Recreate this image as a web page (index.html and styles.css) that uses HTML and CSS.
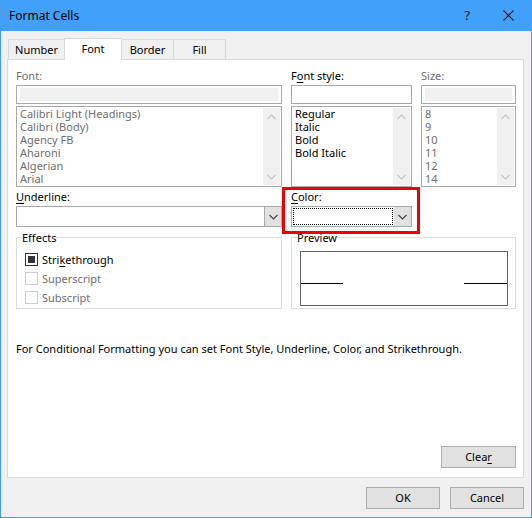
FILE: index.html
```html
<!DOCTYPE html>
<html>
<head>
<meta charset="utf-8">
<title>Format Cells</title>
<link rel="stylesheet" href="styles.css">
</head>
<body>
<div class="window">
  <div class="titlebar">
    <span class="title">Format Cells</span>
    <div class="tb-buttons">
      <span class="help">?</span>
      <svg class="close" width="11" height="11" viewBox="0 0 11 11"><path d="M0.5 0.5 L10.5 10.5 M10.5 0.5 L0.5 10.5" stroke="#1a1a1a" stroke-width="1.1" fill="none"/></svg>
    </div>
  </div>
  <div class="body">
    <div class="tabs">
      <div class="tab">Number</div>
      <div class="tab active">Font</div>
      <div class="tab">Border</div>
      <div class="tab">Fill</div>
    </div>
    <div class="panel">
      <div class="top-grid">
        <div class="col col-font">
          <div class="label disabled">Font:</div>
          <div class="input disabled-input"><div class="fill"></div></div>
          <div class="list">
            <ul class="items gray">
              <li>Calibri Light (Headings)</li>
              <li>Calibri (Body)</li>
              <li>Agency FB</li>
              <li>Aharoni</li>
              <li>Algerian</li>
              <li>Arial</li>
            </ul>
            <div class="scrollbar">
              <svg width="9" height="6" viewBox="0 0 9 6"><path d="M0.5 5 L4.5 1 L8.5 5" stroke="#c4c4c4" stroke-width="1.2" fill="none"/></svg>
              <svg width="9" height="6" viewBox="0 0 9 6"><path d="M0.5 1 L4.5 5 L8.5 1" stroke="#c4c4c4" stroke-width="1.2" fill="none"/></svg>
            </div>
          </div>
        </div>
        <div class="col col-style">
          <div class="label">F<u>o</u>nt style:</div>
          <div class="input"></div>
          <div class="list">
            <ul class="items">
              <li>Regular</li>
              <li>Italic</li>
              <li>Bold</li>
              <li>Bold Italic</li>
            </ul>
            <div class="scrollbar">
              <svg width="9" height="6" viewBox="0 0 9 6"><path d="M0.5 5 L4.5 1 L8.5 5" stroke="#c4c4c4" stroke-width="1.2" fill="none"/></svg>
              <svg width="9" height="6" viewBox="0 0 9 6"><path d="M0.5 1 L4.5 5 L8.5 1" stroke="#c4c4c4" stroke-width="1.2" fill="none"/></svg>
            </div>
          </div>
        </div>
        <div class="col col-size">
          <div class="label disabled">Size:</div>
          <div class="input disabled-input"><div class="fill"></div></div>
          <div class="list">
            <ul class="items gray">
              <li>8</li>
              <li>9</li>
              <li>10</li>
              <li>11</li>
              <li>12</li>
              <li>14</li>
            </ul>
            <div class="scrollbar">
              <svg width="9" height="6" viewBox="0 0 9 6"><path d="M0.5 5 L4.5 1 L8.5 5" stroke="#c4c4c4" stroke-width="1.2" fill="none"/></svg>
              <svg width="9" height="6" viewBox="0 0 9 6"><path d="M0.5 1 L4.5 5 L8.5 1" stroke="#c4c4c4" stroke-width="1.2" fill="none"/></svg>
            </div>
          </div>
        </div>
      </div>

      <div class="mid-row">
        <div class="field field-underline">
          <div class="label"><u>U</u>nderline:</div>
          <div class="combo">
            <div class="combo-text"></div>
            <div class="drop">
              <svg width="9" height="6" viewBox="0 0 9 6"><path d="M0.5 1 L4.5 5 L8.5 1" stroke="#404040" stroke-width="1.1" fill="none"/></svg>
            </div>
          </div>
        </div>
        <div class="field field-color">
          <div class="label"><u>C</u>olor:</div>
          <div class="combo">
            <div class="combo-text"><div class="focus"></div></div>
            <div class="drop">
              <svg width="9" height="6" viewBox="0 0 9 6"><path d="M0.5 1 L4.5 5 L8.5 1" stroke="#404040" stroke-width="1.1" fill="none"/></svg>
            </div>
          </div>
          <div class="highlight"></div>
        </div>
      </div>

      <div class="groups">
        <fieldset class="group effects">
          <legend>Effects</legend>
          <div class="checks">
            <div class="check">
              <span class="box on"><span class="mark"></span></span>
              <span>Stri<u>k</u>ethrough</span>
            </div>
            <div class="check off">
              <span class="box"></span>
              <span>Superscript</span>
            </div>
            <div class="check off">
              <span class="box"></span>
              <span>Subscript</span>
            </div>
          </div>
        </fieldset>
        <fieldset class="group preview">
          <legend>Preview</legend>
          <div class="preview-box">
            <span class="pline left"></span>
            <span class="pline right"></span>
          </div>
        </fieldset>
      </div>

      <p class="note">For Conditional Formatting you can set Font Style, Underline, Color, and Strikethrough.</p>

      <div class="clear-row">
        <button class="btn">Clea<u>r</u></button>
      </div>
    </div>
    <div class="footer">
      <button class="btn">OK</button>
      <button class="btn">Cancel</button>
    </div>
  </div>
</div>
</body>
</html>
```

FILE: styles.css
```css
* { box-sizing: border-box; }
html, body { margin: 0; padding: 0; }
body {
  width: 532px;
  height: 518px;
  overflow: hidden;
  font-family: "Noto Sans", "Open Sans", sans-serif;
  font-size: 11px;
  color: #000;
}
u { text-decoration: underline; text-underline-offset: 2px; text-decoration-thickness: 1px; }

.window {
  width: 532px;
  height: 518px;
  border: 1px solid #3f9bf7;
  border-top: 0;
  background: #f0f0f0;
  display: flex;
  flex-direction: column;
}
.titlebar {
  height: 31px;
  margin: 0 -1px;
  background: #40a0fa;
  display: flex;
  align-items: center;
  justify-content: space-between;
  padding: 0 18px 1px 9px;
}
.title { font-size: 12px; color: #000; }
.tb-buttons { display: flex; align-items: center; gap: 33px; }
.help { font-size: 12.5px; color: #111; }
.close { display: block; }

.body { flex: 1; display: flex; flex-direction: column; padding: 7px 7px 0 6px; }

.tabs { display: flex; padding-left: 1px; height: 21px; align-items: flex-end; position: relative; z-index: 1; }
.tab {
  height: 20px;
  border: 1px solid #d9d9d9;
  border-bottom: 0;
  margin-left: -1px;
  background: #f0f0f0;
  display: flex;
  align-items: center;
  justify-content: center;
  padding-bottom: 0;
}
.tab:nth-child(1) { width: 57px; margin-left: 0; }
.tab:nth-child(2) { width: 58px; }
.tab:nth-child(3) { width: 53px; }
.tab:nth-child(4) { width: 53px; }
.tab.active {
  background: #fff;
  height: 22px;
  margin-bottom: -1px;
  padding-bottom: 3px;
}

.panel {
  height: 419px;
  background: #fff;
  border: 1px solid #d9d9d9;
  padding: 10px 7px 9px 8px;
  display: flex;
  flex-direction: column;
}

.top-grid {
  display: grid;
  grid-template-columns: 266px 121px 95px;
  column-gap: 9px;
}
.col { display: flex; flex-direction: column; }
.label { height: 13px; line-height: 12px; margin-bottom: 2px; white-space: nowrap; }
.label.disabled { color: #6d6d6d; }
.input { height: 19px; border: 1px solid #a9a9a9; background: #fff; }
.disabled-input { padding: 2px 3px; }
.disabled-input .fill { height: 100%; background: #f0f0f0; }
.list {
  margin-top: 2px;
  height: 81px;
  border: 1px solid #a9a9a9;
  display: flex;
  overflow: hidden;
}
.items {
  list-style: none;
  margin: 0;
  padding: 0 0 0 3px;
  flex: 1;
  line-height: 13px;
  white-space: nowrap;
  overflow: hidden;
}
.items.gray { color: #6d6d6d; }
.scrollbar {
  width: 17px;
  margin: 1px 1px 1px 0;
  background: #f0f0f0;
  display: flex;
  flex-direction: column;
  align-items: center;
  justify-content: space-between;
  padding: 6px 0 5px;
}
.scrollbar svg { display: block; }

.mid-row {
  display: flex;
  gap: 9px;
  margin-top: 4px;
}
.field { display: flex; flex-direction: column; position: relative; }
.field-underline { width: 266px; }
.field-color { width: 121px; }
.combo {
  height: 21px;
  border: 1px solid #a9a9a9;
  background: #fff;
  display: flex;
}
.combo-text { flex: 1; padding: 1px; }
.focus { height: 100%; border: 1px dotted #000; }
.drop {
  width: 17px;
  background: #e1e1e1;
  border-left: 1px solid #a9a9a9;
  display: flex;
  align-items: center;
  justify-content: center;
}
.field-color .drop { border-left: 0; }
.highlight {
  position: absolute;
  left: -9px;
  right: -8px;
  top: -4px;
  bottom: -7px;
  border: 3px solid #ee0000;
  pointer-events: none;
}

.groups {
  display: flex;
  gap: 9px;
  margin-top: 4px;
  align-items: flex-start;
}
.group {
  margin: 0;
  border: 1px solid #dcdcdc;
  padding: 0 0 0 5px;
  min-width: 0;
}
.group legend { padding: 0; line-height: 13px; height: 13px; }
.effects { width: 266px; padding-bottom: 1px; }
.checks { padding: 6px 0 0 3px; }
.check { height: 19px; display: flex; align-items: center; gap: 4px; }
.check.off { color: #6d6d6d; }
.box {
  width: 13px;
  height: 13px;
  border: 1px solid #cccccc;
  background: #fff;
  display: flex;
  align-items: center;
  justify-content: center;
}
.box.on { border-color: #333; }
.mark { width: 7px; height: 7px; background: #333; }

.preview { width: 225px; padding-bottom: 2px; }
.preview-box {
  margin: 7px 0 0 3px;
  width: 208px;
  height: 55px;
  border: 1px solid #646464;
  display: flex;
  justify-content: space-between;
  align-items: flex-start;
}
.pline { display: block; height: 1px; background: #000; margin-top: 31px; }
.pline.left { width: 42px; }
.pline.right { width: 43px; }

.note { margin: 33px 0 0; line-height: 14px; white-space: nowrap; }

.clear-row { margin-top: auto; display: flex; justify-content: flex-end; }
.btn {
  font: inherit;
  color: #000;
  height: 22px;
  width: 75px;
  background: #e1e1e1;
  border: 1px solid #adadad;
  padding: 0 0 1px;
  margin: 0;
}
.footer {
  display: flex;
  justify-content: flex-end;
  gap: 10px;
  padding-top: 9px;
}
.footer .btn { width: 74px; }
```
